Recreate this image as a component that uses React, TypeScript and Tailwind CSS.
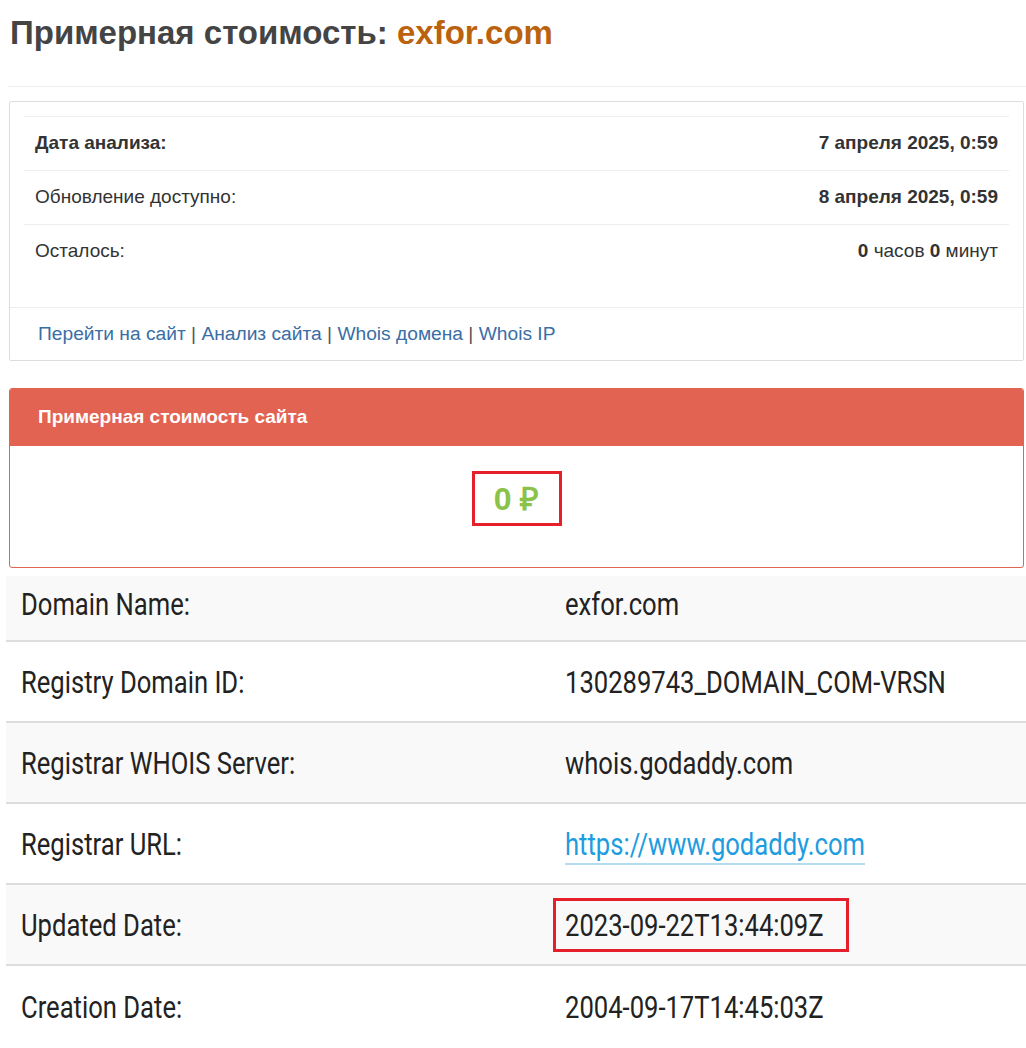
import React from "react";

const rows = [
  { label: "Domain Name:", value: "exfor.com" },
  { label: "Registry Domain ID:", value: "130289743_DOMAIN_COM-VRSN" },
  { label: "Registrar WHOIS Server:", value: "whois.godaddy.com" },
  { label: "Registrar URL:", value: "https://www.godaddy.com", link: true },
  { label: "Updated Date:", value: "2023-09-22T13:44:09Z", boxed: true },
  { label: "Creation Date:", value: "2004-09-17T14:45:03Z" },
];

function Narrow({ children, className = "" }: { children: React.ReactNode; className?: string }) {
  return (
    <span className={`inline-block origin-left scale-x-[0.8] whitespace-nowrap ${className}`}>{children}</span>
  );
}

export default function App() {
  return (
    <div className="w-[1026px] h-[1048px] overflow-hidden bg-white text-[#333] font-['Liberation_Sans',Arial,sans-serif]">
      {/* Title */}
      <h1 className="pl-[10px] pt-[13px] h-[86px] text-[33px] leading-[40px] font-bold text-[#444]">
        Примерная стоимость: <span className="text-[#bb620e]">exfor.com</span>
      </h1>
      <div className="ml-[8px] border-t border-[#eeeeee]" />

      {/* Info card */}
      <div className="mt-[14px] mx-[9px] w-[1015px] h-[260px] border border-[#dddddd] rounded-[2px] flex flex-col">
        <div className="px-[14px] pt-[14px] h-[205px]">
          <div className="border-t border-[#eeeeee]" />
          <div className="flex items-center justify-between h-[53px] px-[11px] text-[19px]">
            <span className="font-bold">Дата анализа:</span>
            <span className="font-bold">7 апреля 2025, 0:59</span>
          </div>
          <div className="border-t border-[#eeeeee]" />
          <div className="flex items-center justify-between h-[53px] px-[11px] text-[19px]">
            <span>Обновление доступно:</span>
            <span className="font-bold">8 апреля 2025, 0:59</span>
          </div>
          <div className="border-t border-[#eeeeee]" />
          <div className="flex items-center justify-between h-[53px] px-[11px] text-[19px]">
            <span>Осталось:</span>
            <span>
              <b>0</b> часов <b>0</b> минут
            </span>
          </div>
        </div>
        <div className="border-t border-[#eeeeee] flex-1 flex items-center pl-[28px] text-[19.2px] text-[#3a6ea5]">
          <span>
            Перейти на сайт <span className="text-[#555]">|</span> Анализ сайта{" "}
            <span className="text-[#555]">|</span> Whois домена <span className="text-[#555]">|</span> Whois IP
          </span>
        </div>
      </div>

      {/* Price panel */}
      <div className="mt-[27px] mx-[9px] w-[1015px] h-[180px] border border-[#e36353] rounded-[3px] flex flex-col overflow-hidden">
        <div className="h-[57px] bg-[#e36353] flex items-center pl-[28px] text-white font-bold text-[19px]">
          Примерная стоимость сайта
        </div>
        <div className="flex-1 flex items-start justify-center pt-[25px]">
          <div className="w-[90px] h-[55px] border-[3px] border-[#e3202b] flex items-center justify-center">
            <span className="text-[32px] font-bold text-[#8bc34a]">0 ₽</span>
          </div>
        </div>
      </div>

      {/* Whois table */}
      <div className="mt-[8px] ml-[6px] w-[1020px] font-['Roboto',sans-serif] text-[32px] text-[#222]">
        {rows.map((r, i) => (
          <div
            key={r.label}
            className={`flex items-center ${i === rows.length - 1 ? "" : "border-b-2 border-[#dddddd]"} ${
              i === 0 ? "h-[66px] pb-[8px]" : "h-[81px]"
            } ${i % 2 === 0 ? "bg-[#f9f9f9]" : "bg-white"}`}
          >
            <div className="w-[544px] shrink-0 pl-[15px]">
              <Narrow>{r.label}</Narrow>
            </div>
            <div className="flex-1 pl-[15px]">
              {r.link ? (
                <Narrow className="border-b-2 border-[#b3dcf2] leading-[38px] text-[#1e9ce0]">{r.value}</Narrow>
              ) : r.boxed ? (
                <span className="inline-flex items-center ml-[-12px] pl-[9px] w-[296px] h-[54px] border-[3px] border-[#e3202b]">
                  <Narrow>{r.value}</Narrow>
                </span>
              ) : (
                <Narrow>{r.value}</Narrow>
              )}
            </div>
          </div>
        ))}
      </div>
    </div>
  );
}
